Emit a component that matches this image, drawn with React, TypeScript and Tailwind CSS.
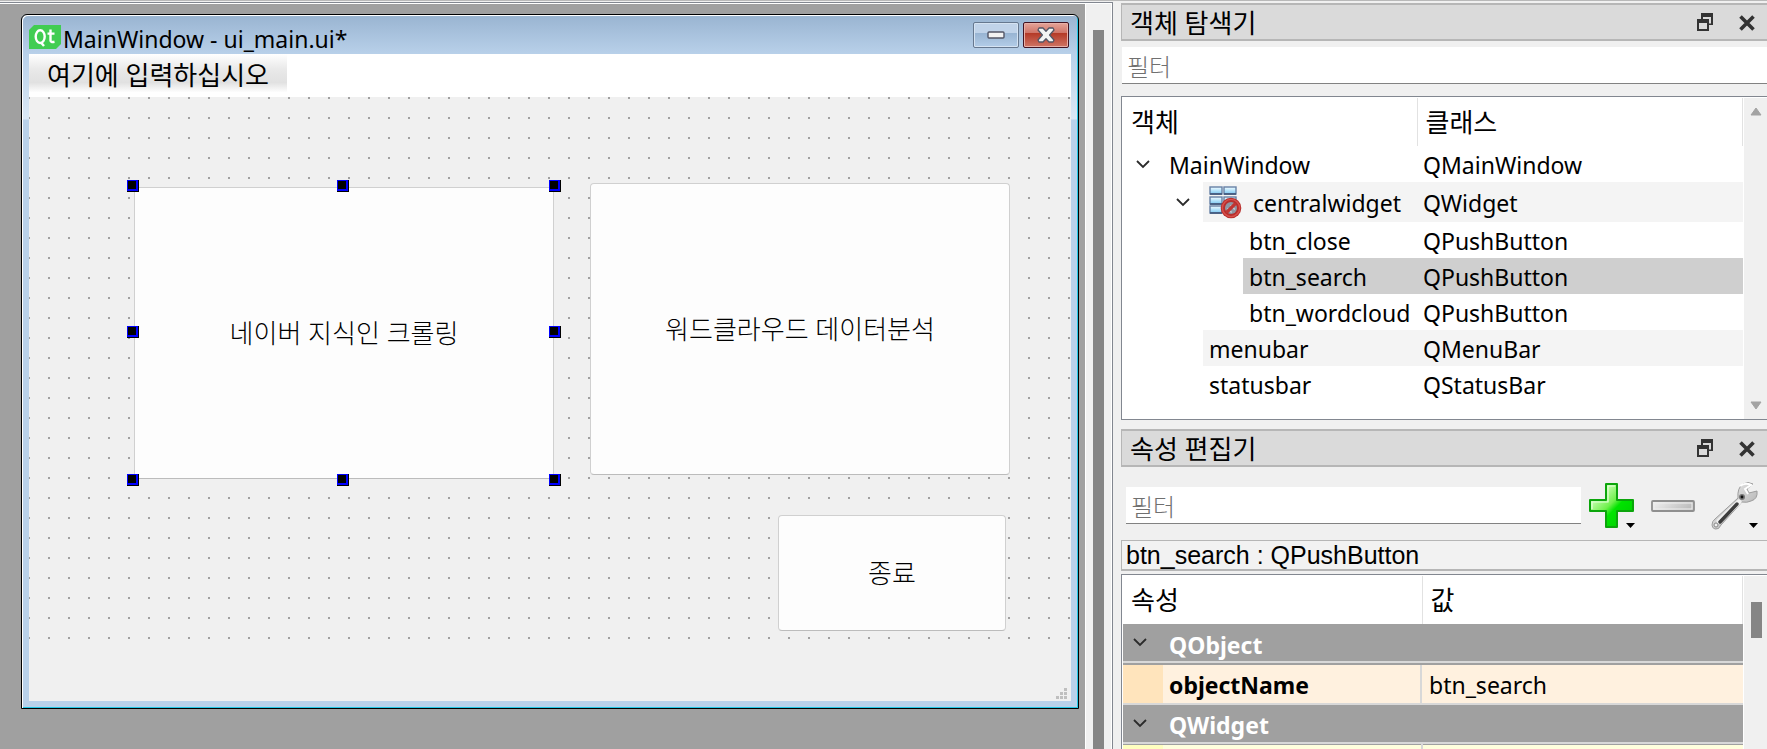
import React from "react";

const UI = "font-['Noto_Sans','Noto_Sans_CJK_KR',sans-serif]";

function Chevron({ className = "" }: { className?: string }) {
  return (
    <svg width="14" height="9" viewBox="0 0 14 9" className={className} aria-hidden="true">
      <path d="M1 1 L7 7 L13 1" fill="none" stroke="#2b2b2b" strokeWidth="1.8" />
    </svg>
  );
}

function QtLogo() {
  return (
    <svg width="32" height="24" viewBox="0 0 32 24" className="mt-1" aria-hidden="true">
      <path d="M5 0 H32 V19 L27 24 H0 V5 Z" fill="#41cd52" />
      <g fill="none" stroke="#fff" strokeWidth="2.4">
        <ellipse cx="11.2" cy="11.6" rx="4.5" ry="6.4" />
        <path d="M12 17.5 L15 21" />
        <path d="M21.5 4.5 V15.5 Q21.5 17.6 25.5 16.8 M18.5 8.6 H25.5" />
      </g>
    </svg>
  );
}

function MinimizeGlyph() {
  return (
    <svg width="18" height="8" viewBox="0 0 18 8" aria-hidden="true">
      <rect x="1" y="1" width="16" height="6" rx="1" fill="#f2f2f2" stroke="#535666" strokeWidth="1.4" />
    </svg>
  );
}

function WindowCloseGlyph() {
  return (
    <svg width="18" height="16" viewBox="0 0 18 16" aria-hidden="true">
      <path
        d="M2 1 H6 L9 4.2 L12 1 H16 L17 3 L12.6 8 L17 13 L16 15 H12 L9 11.8 L6 15 H2 L1 13 L5.4 8 L1 3 Z"
        fill="#f3f3f3"
        stroke="#535666"
        strokeWidth="1.3"
        strokeLinejoin="round"
      />
    </svg>
  );
}

function FloatGlyph() {
  return (
    <svg width="16" height="18" viewBox="0 0 16 18" aria-hidden="true">
      <path d="M4 0 H16 V12 H11 V10.5 H14 V4 H6 V6 H4 Z" fill="#333" />
      <path d="M0 6 H12 V18 H0 Z M2 10 V16 H10 V10 Z" fill="#333" fillRule="evenodd" />
    </svg>
  );
}

function DockCloseGlyph() {
  return (
    <svg width="16" height="16" viewBox="0 0 16 16" aria-hidden="true">
      <path d="M1.5 1.5 L14.5 14.5 M14.5 1.5 L1.5 14.5" stroke="#333" strokeWidth="3.6" />
    </svg>
  );
}

function BrokenLayoutIcon() {
  const cells = [
    [0, 0], [14, 0],
    [0, 10], [14, 10],
    [0, 19], [14, 19],
  ];
  return (
    <svg width="33" height="33" viewBox="0 0 33 33" aria-hidden="true">
      <defs>
        <linearGradient id="cell" x1="0" y1="0" x2="0" y2="1">
          <stop offset="0" stopColor="#f4fcff" />
          <stop offset="0.5" stopColor="#b5e3fb" />
          <stop offset="1" stopColor="#7cc6f0" />
        </linearGradient>
      </defs>
      {cells.map(([x, y]) => (
        <g key={`${x}-${y}`}>
          <rect x={x + 1} y={y + 1} width="12" height="7" fill="url(#cell)" stroke="#6681a6" strokeWidth="1.4" />
          <path d={`M${x + 1} ${y + 8} H${x + 13}`} stroke="#3f5478" strokeWidth="1.6" />
        </g>
      ))}
      <circle cx="22" cy="22" r="10.3" fill="#b72f2d" />
      <circle cx="22" cy="22" r="8.6" fill="none" stroke="#d9504b" strokeWidth="1.4" />
      <circle cx="22" cy="22" r="6" fill="#8f96a3" />
      <path d="M20 25 L25 20" stroke="#c9ccd2" strokeWidth="6" strokeDasharray="1.5 3" />
      <path d="M17.6 26.4 L26.4 17.6" stroke="#c23431" strokeWidth="3.4" />
    </svg>
  );
}

function PlusIcon() {
  return (
    <svg width="46" height="46" viewBox="0 0 46 46" aria-hidden="true">
      <defs>
        <linearGradient id="plus" x1="0" y1="0" x2="1" y2="1">
          <stop offset="0.2" stopColor="#c9ffb4" />
          <stop offset="0.47" stopColor="#6ff04c" />
          <stop offset="0.58" stopColor="#00e400" />
          <stop offset="1" stopColor="#00c800" />
        </linearGradient>
      </defs>
      <path d="M17 1 H28 V17 H44 V28 H28 V44 H17 V28 H1 V17 H17 Z" fill="url(#plus)" stroke="#0ba50b" strokeWidth="2" strokeLinejoin="round" />
      <path d="M19 3 H26 M19 3 V19 H3 V26" fill="none" stroke="#e4ffd9" strokeWidth="1.2" />
      <path d="M37 40 H46 L41.5 45 Z" fill="#000" />
    </svg>
  );
}

function MinusIcon() {
  return (
    <svg width="44" height="12" viewBox="0 0 44 12" aria-hidden="true">
      <defs>
        <linearGradient id="minus" x1="0" y1="0" x2="1" y2="0.3">
          <stop offset="0" stopColor="#f3f3f3" />
          <stop offset="1" stopColor="#bdbdbd" />
        </linearGradient>
      </defs>
      <rect x="1" y="1" width="42" height="10" rx="1" fill="url(#minus)" stroke="#8f8f8f" strokeWidth="1.8" />
      <rect x="3" y="3" width="38" height="6" fill="none" stroke="#eeeeee" />
    </svg>
  );
}

function WrenchIcon() {
  return (
    <svg width="48" height="48" viewBox="0 0 48 48" aria-hidden="true">
      <defs>
        <linearGradient id="steel" x1="0" y1="0" x2="1" y2="1">
          <stop offset="0" stopColor="#fafafa" />
          <stop offset="0.6" stopColor="#c4c4c4" />
          <stop offset="1" stopColor="#8c8c8c" />
        </linearGradient>
      </defs>
      <path
        d="M1 43 Q1 39 4 37 L27 16 Q26 6 32 2 Q37 -1 42 2 L36 7 L38 11 L46 9 Q47 17 40 19 Q36 21 31 20 L10 43 Q8 48 4 47 Q1 46 1 43 Z"
        fill="url(#steel)"
        stroke="#9d9d9d"
        strokeWidth="1"
      />
      <path d="M8 39 L28 20" stroke="#f0f0f0" strokeWidth="5" strokeLinecap="round" />
      <path d="M9 40 L26 22" stroke="#3d3d3d" strokeWidth="3.4" strokeLinecap="round" />
      <path d="M29 4 Q34 0 40 3 L34 7 L37 12" fill="none" stroke="#fff" strokeWidth="2" />
      <circle cx="5" cy="43" r="2" fill="#f0f0f0" stroke="#8a8a8a" />
      <circle cx="31" cy="15" r="3" fill="#777" />
      <circle cx="31" cy="15" r="1.4" fill="#111" />
      <path d="M38 41 H47 L42.5 46 Z" fill="#000" />
    </svg>
  );
}

function ResizeGrip() {
  const dots = [[8, 0], [4, 4], [8, 4], [0, 8], [4, 8], [8, 8]];
  return (
    <svg width="11" height="11" viewBox="0 0 11 11" aria-hidden="true">
      {dots.map(([x, y]) => (
        <rect key={`${x}-${y}`} x={x} y={y} width="3" height="3" fill="#bfbfbf" />
      ))}
    </svg>
  );
}

function DockTitle({ title }: { title: string }) {
  return (
    <header className="flex h-[38px] shrink-0 items-center border-y-2 border-l border-[#b6b6b6] bg-[#dadada] pl-2 pr-3">
      <h2 className="flex-1 pt-0.5 text-[26px] leading-8">{title}</h2>
      <button aria-label="분리" className="mr-[26px]">
        <FloatGlyph />
      </button>
      <button aria-label="닫기" className="pt-0.5">
        <DockCloseGlyph />
      </button>
    </header>
  );
}

function Handle({ className }: { className: string }) {
  return (
    <span className={`absolute size-3 border-r border-b border-black bg-[#0000ff] pt-px pl-px ${className}`}>
      <span className="block size-2 bg-black" />
    </span>
  );
}

const formButton =
  "absolute rounded-sm border border-[#d0d0d0] border-b-[#bcbcbc] bg-[#fdfdfd] text-[26px] font-light";

function FormWindow() {
  return (
    <section className="mr-[6px] ml-[21px] mt-2.5 flex h-[695px] flex-col rounded-t-md border border-black bg-[#b9d1ea] bg-[linear-gradient(#99b4d1,#b9d1ea_40px,#dbe8f5_104px,#b9d1ea_105px)] shadow-[inset_1px_1px_0_#fff,inset_-1px_-1px_0_#23c8e6]">
      <header className="flex h-[39px] shrink-0 items-center pl-[7px] pr-[9px]">
        <QtLogo />
        <h1 className="ml-0.5 flex-1 pt-2 text-[23px] leading-8">MainWindow - ui_main.ui*</h1>
        <button
          aria-label="최소화"
          className="mr-1 flex h-[26px] w-[46px] items-center justify-center rounded-xs border border-[#66788f] bg-[linear-gradient(#c0d3e9_40%,#98b4d2_42%,#b3cde8)] shadow-[inset_0_0_0_1px_#d5e3f2]"
        >
          <MinimizeGlyph />
        </button>
        <button
          aria-label="창 닫기"
          className="flex h-[26px] w-[46px] items-center justify-center rounded-xs border border-[#431422] bg-[linear-gradient(#e5a499,#d0766a_40%,#b43826_42%,#cf7565)] shadow-[inset_0_0_0_1px_#e8b0a8]"
        >
          <WindowCloseGlyph />
        </button>
      </header>
      <div className="mx-[7px] mb-[7px] flex flex-1 flex-col bg-[#f0f0f0]">
        <nav className="flex h-[43px] shrink-0 bg-white">
          <button className="h-[38px] bg-[linear-gradient(#fff,#e9e9e9_40%,#e1e1e1_75%,#fdfdfd)] px-[18px] pt-1 text-[26px] leading-[34px]">
            여기에 입력하십시오
          </button>
        </nav>
        <div className="relative h-[544px] overflow-hidden bg-[conic-gradient(from_270deg_at_2px_2px,#a0a0a0_90deg,transparent_0)] bg-[length:20px_20px] bg-[position:-1px_0px]">
          <button className={`${formButton} left-[105px] top-[90px] h-[292px] w-[420px]`}>네이버 지식인 크롤링</button>
          <button className={`${formButton} left-[561px] top-[86px] h-[292px] w-[420px]`}>워드클라우드 데이터분석</button>
          <button className={`${formButton} left-[749px] top-[418px] h-[116px] w-[228px]`}>종료</button>
          <Handle className="left-[98px] top-[83px]" />
          <Handle className="left-[308px] top-[83px]" />
          <Handle className="left-[520px] top-[83px]" />
          <Handle className="left-[98px] top-[229px]" />
          <Handle className="left-[520px] top-[229px]" />
          <Handle className="left-[98px] top-[377px]" />
          <Handle className="left-[308px] top-[377px]" />
          <Handle className="left-[520px] top-[377px]" />
        </div>
        <footer className="flex flex-1 items-end justify-end pb-0.5 pr-1">
          <ResizeGrip />
        </footer>
      </div>
    </section>
  );
}

type Node = {
  name: string;
  cls: string;
  indent: string;
  row: string;
  fill: string;
  open?: boolean;
  icon?: boolean;
};

const nodes: Node[] = [
  { name: "MainWindow", cls: "QMainWindow", indent: "w-10", row: "h-9", fill: "", open: true },
  { name: "centralwidget", cls: "QWidget", indent: "w-20", row: "h-10", fill: "bg-[#f4f4f4]", open: true, icon: true },
  { name: "btn_close", cls: "QPushButton", indent: "w-[120px]", row: "h-9", fill: "" },
  { name: "btn_search", cls: "QPushButton", indent: "w-[120px]", row: "h-9", fill: "bg-[#cfcfcf]" },
  { name: "btn_wordcloud", cls: "QPushButton", indent: "w-[120px]", row: "h-9", fill: "" },
  { name: "menubar", cls: "QMenuBar", indent: "w-20", row: "h-9", fill: "bg-[#f4f4f4]" },
  { name: "statusbar", cls: "QStatusBar", indent: "w-20", row: "h-9", fill: "" },
];

function ObjectTree() {
  return (
    <div className="flex h-[324px] shrink-0 border-y border-l border-[#828790] bg-white pl-px pt-px">
      <div className="min-w-0 flex-1 pr-px">
        <table className="w-full table-fixed border-collapse text-left text-[23px] leading-8">
          <colgroup>
            <col className="w-[294px]" />
            <col />
          </colgroup>
          <thead>
            <tr className="h-12 text-[26px]">
              <th className="border-r border-[#e2e2e2] pl-2 font-normal">객체</th>
              <th className="border-r border-[#e2e2e2] pl-2 font-normal">클래스</th>
            </tr>
          </thead>
          <tbody>
            {nodes.map((n) => (
              <tr key={n.name} className={n.row}>
                <td className="p-0">
                  <div className={`flex ${n.row}`}>
                    <span className={`flex shrink-0 items-center justify-end ${n.indent}`}>
                      {n.open && <Chevron className="mr-[13px]" />}
                    </span>
                    <span className={`flex flex-1 items-center whitespace-nowrap pl-1.5 ${n.fill}`}>
                      {n.icon && (
                        <span className="mr-[11px]">
                          <BrokenLayoutIcon />
                        </span>
                      )}
                      <span className="pt-0.5">{n.name}</span>
                    </span>
                  </div>
                </td>
                <td className={`pt-0.5 pb-0 pl-1.5 ${n.fill}`}>{n.cls}</td>
              </tr>
            ))}
          </tbody>
        </table>
      </div>
      <div className="flex w-[23px] flex-col items-center justify-between bg-[#f0f0f0] py-[9px] pl-px">
        <svg width="12" height="9" viewBox="0 0 12 9" aria-hidden="true">
          <path d="M6 1 L11 8 H1 Z" fill="#a3a3a3" stroke="#a3a3a3" strokeLinejoin="round" />
        </svg>
        <svg width="12" height="9" viewBox="0 0 12 9" aria-hidden="true">
          <path d="M6 8 L11 1 H1 Z" fill="#a3a3a3" stroke="#a3a3a3" strokeLinejoin="round" />
        </svg>
      </div>
    </div>
  );
}

function GroupRow({ name }: { name: string }) {
  return (
    <tr className="h-10 border-b border-[#a0a0a0]">
      <th colSpan={2} className="bg-[#a0a0a0] p-0 text-left font-bold text-white">
        <div className="flex h-[39px] items-center border-b-2 border-[#d8d8d8]">
          <Chevron className="mx-2.5" />
          <span className="pl-3 pt-1">{name}</span>
        </div>
      </th>
    </tr>
  );
}

function PropertyTable() {
  return (
    <div className="mt-[3px] flex min-h-0 flex-1 overflow-hidden border-l border-t border-[#828790] bg-white pl-px pt-px">
      <div className="min-w-0 flex-1 pr-px">
        <table className="w-full table-fixed border-collapse text-left text-[23px] leading-8">
          <colgroup>
            <col className="w-[299px]" />
            <col />
          </colgroup>
          <thead>
            <tr className="h-12 text-[26px]">
              <th className="border-r border-[#e2e2e2] pl-2 font-normal">속성</th>
              <th className="border-r border-[#e2e2e2] pl-2 font-normal">값</th>
            </tr>
          </thead>
          <tbody>
            <GroupRow name="QObject" />
            <tr className="h-10 bg-[#fff1df]">
              <th className="p-0 font-bold">
                <div className="flex h-10 border-b-2 border-r-2 border-[#d8d8d8]">
                  <span className="w-10 bg-[#ffe4bc]" />
                  <span className="pl-1.5 pt-1">objectName</span>
                </div>
              </th>
              <td className="p-0">
                <div className="h-10 border-b-2 border-[#d8d8d8] pl-[7px] pt-1">btn_search</div>
              </td>
            </tr>
            <GroupRow name="QWidget" />
            <tr className="h-10 bg-[#ffffdd]">
              <td className="p-0">
                <div className="h-10 w-10 bg-[#ffffbf]" />
              </td>
              <td className="border-l-2 border-[#d8d8d8] p-0" />
            </tr>
          </tbody>
        </table>
      </div>
      <div className="flex w-[23px] flex-col items-center bg-[#f0f0f0] pt-[26px] pl-px">
        <span className="h-9 w-[11px] bg-[#858585]" />
      </div>
    </div>
  );
}

const filterInput =
  "h-[37px] min-w-0 border-b border-[#828282] bg-white px-[5px] pt-0.5 text-2xl font-light outline-none placeholder:text-[#707070]";

export default function App() {
  return (
    <div className={`flex h-screen overflow-hidden border-t border-[#b9b9b9] bg-[#f0f0f0] text-black ${UI}`}>
      <main className="mt-px flex min-w-0 flex-1 border-r border-t border-[#828790]">
        <div className="min-w-0 flex-1 border-t border-white bg-[#a0a0a0]">
          <FormWindow />
        </div>
        <div className="flex w-[27px] flex-col items-center border-x border-t border-white bg-[#f0f0f0] pt-[26px]">
          <span className="w-[11px] flex-1 bg-[#858585]" />
        </div>
      </main>
      <aside className="flex w-[654px] shrink-0 flex-col pl-2 pt-0.5">
        <DockTitle title="객체 탐색기" />
        <input aria-label="객체 필터" placeholder="필터" className={`${filterInput} mb-3 ml-px mt-1.5 shrink-0`} />
        <ObjectTree />
        <div className="h-[9px] shrink-0" />
        <DockTitle title="속성 편집기" />
        <div className="flex h-[73px] shrink-0 items-center pl-[5px] pr-2 pt-1">
          <input aria-label="속성 필터" placeholder="필터" className={`${filterInput} mr-2 flex-1`} />
          <button aria-label="추가" className="mr-4">
            <PlusIcon />
          </button>
          <button aria-label="제거" className="mr-4">
            <MinusIcon />
          </button>
          <button aria-label="설정">
            <WrenchIcon />
          </button>
        </div>
        <p className="h-[31px] shrink-0 border-b-2 border-l border-t border-[#b6b6b6] bg-[#f2f2f2] pl-1 font-['Liberation_Sans',sans-serif] text-[25px] leading-7">
          btn_search : QPushButton
        </p>
        <PropertyTable />
      </aside>
    </div>
  );
}
